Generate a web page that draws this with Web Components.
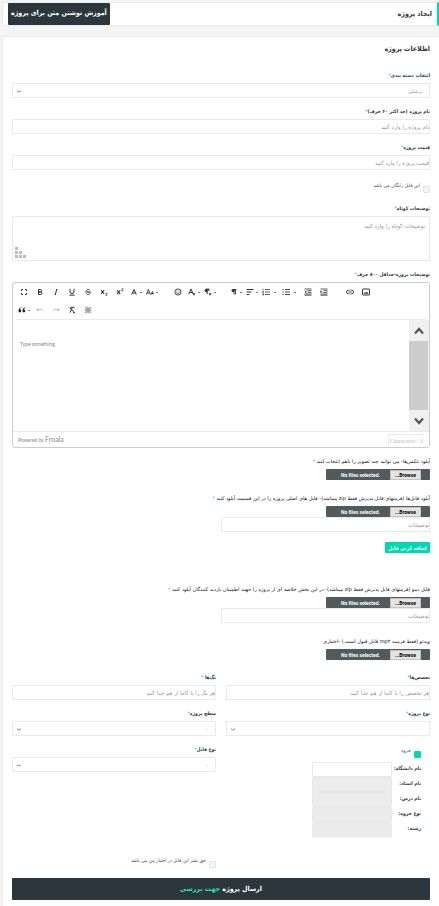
<!DOCTYPE html>
<html lang="fa" dir="rtl">
<head>
<meta charset="UTF-8">
<meta name="viewport" content="width=device-width, initial-scale=1">
<title>ایجاد پروژه</title>
<style>
  body {
    margin: 0;
    background: #f4f4f4;
    color: #2b373a;
    font-family: "DejaVu Sans Condensed", "DejaVu Sans", sans-serif;
    font-size: 5px;
  }
</style>
</head>
<body>
<project-page></project-page>

<script>
const baseStyle = `
  *, *::before, *::after { box-sizing: border-box; }
  :host { display: block; }
  button, input, textarea, select { font-family: inherit; margin: 0; }
  .req { color: #00d7b3; }
`;

const labelStyle = `
  label.title {
    display: block;
    padding: 8px 0 3px;
    font-size: 5px;
    font-weight: bold;
    line-height: 10px;
    white-space: nowrap;
  }
`;

class PageHeader extends HTMLElement {
  connectedCallback() {
    this.attachShadow({ mode: 'open' });
    this.shadowRoot.innerHTML = `
      <style>
        ${baseStyle}
        header {
          display: flex;
          justify-content: space-between;
          align-items: flex-end;
          height: 24px;
          padding: 0 5px;
          background: #fff;
          border: 1px solid #ebebeb;
          border-right: 2px solid #00d7b3;
        }
        h1 {
          margin: 0;
          font-size: 7px;
          line-height: 22px;
          font-weight: bold;
        }
        a {
          display: block;
          padding: 0 3px;
          background: #2b373c;
          border-radius: 1px;
          color: #fff;
          font-size: 7px;
          font-weight: bold;
          line-height: 20px;
          height: 22px;
          text-decoration: none;
          white-space: nowrap;
        }
      </style>
      <header>
        <h1><slot></slot></h1>
        <a href="#guide"><slot name="action"></slot></a>
      </header>
    `;
  }
}

class FormField extends HTMLElement {
  connectedCallback() {
    const kind = this.getAttribute('kind') || 'text';
    const hint = this.getAttribute('placeholder') || '';
    const label = this.getAttribute('label');
    const star = this.getAttribute('star') || '';
    let control = `<input id="control" type="text" placeholder="${hint}">`;
    if (kind === 'select') {
      control = `
        <div class="select">
          <select id="control"><option>${hint}</option></select>
          <svg width="4" height="3" viewBox="0 0 4 3"><path d="M0 .7 2 2.1 4 .7" fill="none" stroke="#666" stroke-width=".8"/></svg>
        </div>`;
    }
    if (kind === 'textarea') {
      control = `
        <div class="area">
          <textarea id="control" placeholder="${hint}"></textarea>
          <svg width="11" height="11" viewBox="0 0 11 11" fill="#bdbdbd">
            <path d="M0 0h3v3H0zM0 4h3v3H0zM4 4h3v3H4zM0 8h3v3H0zM4 8h3v3H4zM8 8h3v3H8z"/>
          </svg>
        </div>`;
    }
    this.attachShadow({ mode: 'open' });
    this.shadowRoot.innerHTML = `
      <style>
        ${baseStyle}
        ${labelStyle}
        input, select, textarea {
          display: block;
          width: 100%;
          height: 15px;
          padding: 0;
          background: #fff;
          border: 1px solid #e9e9e9;
          border-radius: 1px;
          color: #999;
          font-size: 6px;
          outline: none;
        }
        ::placeholder { color: #999; opacity: 1; }
        .select, .area { display: grid; }
        .select > *, .area > * { grid-area: 1 / 1; }
        select { appearance: none; padding: 0 7px; font-size: 5px; }
        .select svg { place-self: center end; margin: 1px 5px 0; pointer-events: none; }
        textarea { height: 45px; padding: 5px 4px; resize: none; line-height: 8px; }
        .area svg { place-self: end; margin: 3px; }
      </style>
      ${label ? `<label class="title" for="control">${label}<span class="req">${star}</span></label>` : ''}
      ${control}
    `;
    if (!label) this.shadowRoot.querySelector('#control').setAttribute('aria-label', hint);
  }
}

class FilePicker extends HTMLElement {
  connectedCallback() {
    const star = this.getAttribute('star') || '';
    this.attachShadow({ mode: 'open' });
    this.shadowRoot.innerHTML = `
      <style>
        ${baseStyle}
        ${labelStyle}
        label.title { color: #111; font-family: "DejaVu Sans", sans-serif; font-weight: normal; }
        .picker {
          display: flex;
          align-items: center;
          width: 104px;
          height: 11px;
          padding: 0 9px;
          gap: 10px;
          background: #515b5e;
          border-radius: 1px;
          color: #fff;
          font: bold 5px Roboto, sans-serif;
          white-space: nowrap;
        }
        input { position: absolute; width: 1px; height: 1px; opacity: 0; }
        .browse {
          width: 31px;
          height: 10px;
          background: #e3e3e3;
          border: 1px solid #c4c4c4;
          color: #000;
          line-height: 8px;
          text-align: center;
        }
      </style>
      <label class="title" for="file">${this.getAttribute('label')}<span class="req">${star}</span></label>
      <label class="picker">
        <input id="file" type="file" multiple>
        <span class="browse">Browse...</span>
        <span dir="ltr">No files selected.</span>
      </label>
    `;
  }
}

class CheckOption extends HTMLElement {
  connectedCallback() {
    this.attachShadow({ mode: 'open' });
    this.shadowRoot.innerHTML = `
      <style>
        ${baseStyle}
        :host { display: flex; align-items: flex-end; gap: 3px; height: 12px; }
        input {
          appearance: none;
          width: 7px;
          height: 7px;
          background: #f3f3f3;
          border: 1px solid #e3e3e3;
          border-radius: 1px;
        }
        input:checked { background: #00d7b3; border-color: #00d7b3; }
        label { align-self: flex-start; font-size: 5px; line-height: 9px; color: #444; white-space: nowrap; }
      </style>
      <input id="check" type="checkbox" ${this.hasAttribute('checked') ? 'checked' : ''}>
      <label for="check">${this.getAttribute('label')}</label>
    `;
  }
}

class InlineField extends HTMLElement {
  connectedCallback() {
    this.attachShadow({ mode: 'open' });
    this.shadowRoot.innerHTML = `
      <style>
        ${baseStyle}
        :host { display: flex; height: 15px; }
        label { width: 29px; line-height: 12px; font-size: 5px; font-weight: bold; white-space: nowrap; }
        input { width: 80px; height: 15px; background: #fff; border: 1px solid #e9e9e9; border-radius: 1px; }
        input:disabled { background: #ececec; }
      </style>
      <label for="value">${this.getAttribute('label')}</label>
      <input id="value" type="text" ${this.hasAttribute('disabled') ? 'disabled' : ''}>
    `;
  }
}

// icons are drawn in an 8x8 box
const icons = {
  fullscreen: ['<path d="M1.5 3V1.5H3M5 1.5h1.5V3M6.5 5v1.5H5M3 6.5H1.5V5"/>'],
  bold: ['<path d="M2.5 1.5h1.9a1.2 1.2 0 0 1 0 2.5H2.5zM2.5 4h2.3a1.25 1.25 0 0 1 0 2.5H2.5z"/>'],
  italic: ['<path d="M4.6 1.5l-1.2 5M4 1.5h1.3M2.8 6.5H4"/>'],
  underline: ['<path d="M2 .8v2.8a2 2 0 0 0 4 0V.8M1.5 7.2h5"/>'],
  strike: ['<path d="M5.8 2.2C5 .9 2.4 1.1 2.4 2.6 2.4 4 5.8 3.8 5.8 5.3 5.8 7 2.9 7 2.2 5.6M.8 4h6.4" stroke-width=".8"/>'],
  sub: ['<path d="m1 2 3.2 3.8M4.2 2 1 5.8" stroke-width="1.1"/><path d="M5.6 5.3h1.6L5.7 7.3h1.7" stroke-width=".7"/>'],
  sup: ['<path d="m1 2.4 3.2 3.8M4.2 2.4 1 6.2" stroke-width="1.1"/><path d="M5.6.8h1.6L5.7 2.8h1.7" stroke-width=".7"/>'],
  color: ['<path d="M1.7 6.5 4 1.5l2.3 5M2.5 5h3"/>', 1],
  size: ['<path d="M.4 6.5 2.4 1.5l2 5M1 5h2.8M5.2 6.5l1.2-3 1.2 3M5.5 5.6h1.8" stroke-width=".9"/>', 1],
  smile: ['<circle cx="4" cy="4" r="3.1" stroke-width=".9"/><path d="M2.3 4.5q1.7 2.2 3.4 0M2.8 2.5v.9M5.2 2.5v.9" stroke-width=".8"/>'],
  inlineClass: ['<path d="M.8 6 3 1l2.2 5M1.8 4.5h2.4"/><path d="m6 4.4.5 1 1.1.1-.8.8.2 1.1-1-.6-1 .6.2-1.1-.8-.8 1.1-.1z" fill="#333" stroke="none"/>', 1],
  paraStyle: ['<path d="M3 1.2h-.7a1.3 1.3 0 0 0 0 2.6H3z" fill="#333"/><path d="M5.6 1.2H2.3M3.2 1.2v5M4.8 1.2v2"/><path d="m6 4.4.5 1 1.1.1-.8.8.2 1.1-1-.6-1 .6.2-1.1-.8-.8 1.1-.1z" fill="#333" stroke="none"/>', 1],
  paragraph: ['<path d="M6.5 1.5H3.3M4 1.5v5M5.5 1.5v5" stroke-width=".9"/><path d="M4 1.5H3a1 1 0 0 0 0 2.2h1z" fill="#333"/>', 1],
  align: ['<path d="M.5 1.5h7M.5 4h5M.5 6.5h3"/>', 1],
  ordered: ['<path d="M3 1.5h5M3 4h5M3 6.5h5M1 .8v1.6M.5 3.5h1L.5 5h1M.5 6h1v1h-1" stroke-width=".8"/>', 1, 1],
  list: ['<path d="M3 1.5h5M3 4h5M3 6.5h5M.5 1.5h1.2M.5 4h1.2M.5 6.5h1.2" stroke-width=".9"/>', 1, 1],
  outdent: ['<path d="M.5 1h7M3.5 2.7h4M3.5 4.3h4M.5 6h7M.5 7.2h7" stroke-width=".8"/><path d="M2.4 2.2v3L.5 3.7z" fill="#333" stroke="none"/>'],
  indent: ['<path d="M.5 1h7M3.5 2.7h4M3.5 4.3h4M.5 6h7M.5 7.2h7" stroke-width=".8"/><path d="M.5 2.2v3l1.9-1.5z" fill="#333" stroke="none"/>'],
  link: ['<path d="M3.5 2.2H2.3a1.8 1.8 0 0 0 0 3.6h1.2M4.5 2.2h1.2a1.8 1.8 0 0 1 0 3.6H4.5M2.5 4h3" stroke-width=".9"/>'],
  image: ['<rect x=".5" y="1" width="7" height="6" rx=".5"/><path d="m1.5 5.7 1.3-1.6 1 1 1.2-1.7 1.5 2.3z" fill="#333" stroke="none"/>'],
  quote: ['<path d="M3.4 1.2C1.5 1.6.5 3 .5 5a1.4 1.4 0 1 0 1.4-1.4C2 2.6 2.6 2 3.6 1.7zM7.4 1.2C5.5 1.6 4.5 3 4.5 5a1.4 1.4 0 1 0 1.4-1.4C6 2.6 6.6 2 7.6 1.7z" fill="#222" stroke="none"/>', 1],
  undo: ['<path d="M1 2.5v2h2M1.2 4.3Q4 1.5 7.2 5" stroke="#bbb"/>'],
  redo: ['<path d="M7 2.5v2H5M6.8 4.3Q4 1.5.8 5" stroke="#bbb"/>'],
  clear: ['<path d="M2.3 1.3h4.2M4.3 1.5 2 6.7M1.5 1.7l5 5M5 6.7h2"/>'],
  selectAll: ['<path d="M1.3 1.3h5.4v5.4H1.3z" stroke="#666" stroke-width=".8" stroke-dasharray="1 .6"/><rect x="2.7" y="2.7" width="2.6" height="2.6" fill="#aaa" stroke="#666" stroke-width=".6"/>']
};

const toolGroups = [
  ['fullscreen', 'bold', 'italic', 'underline', 'strike', 'sub', 'sup', 'color', 'size'],
  ['smile', 'inlineClass', 'paraStyle'],
  ['paragraph', 'align', 'ordered', 'list', 'outdent', 'indent'],
  ['link', 'image'],
  ['quote', 'undo', 'redo', 'clear', 'selectAll']
];

class TextEditor extends HTMLElement {
  connectedCallback() {
    const tool = (name) => {
      const [shape, menu, wide] = icons[name];
      return `
        <button type="button" aria-label="${name}" class="${menu ? 'menu' : ''} ${wide ? 'wide' : ''}">
          <svg width="8" height="8" viewBox="0 0 8 8" fill="none" stroke="#333">${shape}</svg>
        </button>`;
    };
    this.attachShadow({ mode: 'open' });
    this.shadowRoot.innerHTML = `
      <style>
        ${baseStyle}
        ${labelStyle}
        .editor {
          direction: ltr;
          background: #fff;
          border: 1px solid #ccc;
          border-radius: 3px;
          font-family: Lato, sans-serif;
        }
        .toolbar {
          display: flex;
          flex-wrap: wrap;
          column-gap: 10px;
          margin: 0 3px;
          border-bottom: 1px solid #ebebeb;
        }
        .group { display: flex; }
        button {
          display: flex;
          align-items: center;
          justify-content: center;
          width: 16px;
          height: 18px;
          padding: 0;
          background: none;
          border: 0;
        }
        .menu { justify-content: flex-start; padding: 0 2px; gap: 2px; }
        .menu::after { content: ""; width: 2px; height: 1px; background: #777; }
        .wide { width: 20px; gap: 4px; }
        .content { display: flex; height: 111px; }
        textarea {
          flex: 1;
          min-width: 0;
          padding: 20px 7px;
          border: 0;
          outline: none;
          resize: none;
          font-size: 5px;
          line-height: 8px;
        }
        ::placeholder { color: #888; opacity: 1; }
        .scroll {
          display: flex;
          flex-direction: column;
          width: 20px;
          background: #f0f0f0;
        }
        .scroll button { width: 20px; height: 21px; }
        .thumb { flex: 1; margin-right: 1px; background: #cdcdcd; }
        footer {
          display: flex;
          justify-content: space-between;
          align-items: flex-end;
          height: 16px;
          padding: 0 5px;
          border-top: 1px solid #ebebeb;
          color: #888;
          font-size: 5px;
        }
        footer a { align-self: center; color: inherit; text-decoration: none; line-height: 12px; }
        footer b { font-size: 7px; font-weight: normal; }
        .count {
          padding: 0 1px;
          border: 1px solid #ebebeb;
          border-width: 1px 0 0 1px;
          color: #bbb;
          font-family: "Liberation Serif", serif;
          font-size: 6px;
          line-height: 12px;
        }
      </style>
      <label class="title" for="body">${this.getAttribute('label')}<span class="req">*</span></label>
      <div class="editor">
        <div class="toolbar">
          ${toolGroups.map((g) => `<div class="group">${g.map(tool).join('')}</div>`).join('')}
        </div>
        <div class="content">
          <textarea id="body" placeholder="Type something"></textarea>
          <div class="scroll">
            <button type="button" aria-label="up"><svg width="10" height="8" viewBox="0 0 10 8"><path d="M1 6.5 5 2l4 4.5" fill="none" stroke="#555" stroke-width="2.2"/></svg></button>
            <div class="thumb"></div>
            <button type="button" aria-label="down"><svg width="10" height="8" viewBox="0 0 10 8"><path d="M1 1.5 5 6l4-4.5" fill="none" stroke="#555" stroke-width="2.2"/></svg></button>
          </div>
        </div>
        <footer>
          <a href="#froala">Powered by <b>Froala</b></a>
          <span class="count">Characters : 0</span>
        </footer>
      </div>
    `;
  }
}

class ProjectPage extends HTMLElement {
  connectedCallback() {
    this.attachShadow({ mode: 'open' });
    this.shadowRoot.innerHTML = `
      <style>
        ${baseStyle}
        :host {
          display: flex;
          flex-direction: column;
          gap: 10px;
          min-height: 100vh;
          padding: 2px 0 0 2px;
        }
        main {
          flex: 1;
          padding: 4px 9px 6px;
          background: #fff;
          border: 1px solid #ebebeb;
          border-width: 1px 0 0 1px;
        }
        h2 { margin: 0 0 5px; font-size: 7px; line-height: 16px; }
        .free { margin: 11px 0 2px; }
        .short { width: 50%; }
        .add {
          display: block;
          width: 45px;
          height: 11px;
          margin: 10px 0 23px;
          padding: 0;
          background: #00d7b3;
          border: 0;
          border-radius: 1px;
          color: #fff;
          font-size: 5px;
          font-weight: bold;
          white-space: nowrap;
        }
        file-picker + file-picker { margin-top: 5px; }
        .video { margin-top: 5px; }
        .columns { display: grid; grid-template-columns: 1fr 1fr; gap: 10px; margin-top: 4px; }
        .booklet { margin: 10px 9px 0; }
        .booklet inline-field:first-of-type { margin-top: 4px; }
        .rights { margin-top: 84px; }
        .submit {
          display: block;
          width: 100%;
          height: 22px;
          margin-top: 10px;
          padding: 0;
          background: #2b373c;
          border: 0;
          border-radius: 1px;
          color: #fff;
          font-size: 7px;
          font-weight: bold;
        }
        .submit span { color: #1fe5bd; }
      </style>
      <page-header>ایجاد پروژه<span slot="action">آموزش نوشتن متن برای پروژه</span></page-header>
      <main>
        <h2>اطلاعات پروژه</h2>
        <form-field kind="select" label="انتخاب دسته بندی" star="*" placeholder="پزشکی"></form-field>
        <form-field label="نام پروژه (حد اکثر ۶۰ حرف)" star="*" placeholder="نام پروژه را وارد کنید"></form-field>
        <form-field label="قیمت پروژه" star="*" placeholder="قیمت پروژه را وارد کنید"></form-field>
        <check-option class="free" label="این فایل رایگان می باشد"></check-option>
        <form-field kind="textarea" label="توضیحات کوتاه" star="*" placeholder="توضیحات کوتاه را وارد کنید"></form-field>
        <text-editor label="توضیحات پروژه-حداقل ۸۰۰ حرف"></text-editor>
        <file-picker label="آپلود عکس‌ها- می توانید چند تصویر را باهم انتخاب کنید" star=" *"></file-picker>
        <file-picker label="آپلود فایل‌ها (فرمتهای قابل پذیرش فقط zip میباشد)- فایل های اصلی پروژه را در این قسمت آپلود کنید" star=" *"></file-picker>
        <form-field class="short" placeholder="توضیحات"></form-field>
        <button class="add" type="button">اضافه کردن فایل</button>
        <file-picker label="فایل دمو (فرمتهای قابل پذیرش فقط zip میباشد)- در این بخش خلاصه ای از پروژه را جهت اطمینان بازدید کنندگان آپلود کنید" star=" *"></file-picker>
        <form-field class="short" placeholder="توضیحات"></form-field>
        <file-picker class="video" label="ویدئو (فقط فرمت mp۴ قابل قبول است.) -اختیاری"></file-picker>
        <div class="columns">
          <div>
            <form-field label="تخصص‌ها" star="*" placeholder="هر تخصص را با کاما از هم جدا کنید"></form-field>
            <form-field kind="select" label="نوع پروژه" star="*" placeholder="-"></form-field>
            <div class="booklet">
              <check-option label="جزوه" checked></check-option>
              <inline-field label="نام دانشگاه:"></inline-field>
              <inline-field label="نام استاد:" disabled></inline-field>
              <inline-field label="نام درس:" disabled></inline-field>
              <inline-field label="نوع جزوه:" disabled></inline-field>
              <inline-field label="رشته:" disabled></inline-field>
            </div>
          </div>
          <div>
            <form-field label="تگ‌ها" star=" *" placeholder="هر تگ را با کاما از هم جدا کنید"></form-field>
            <form-field kind="select" label="سطح پروژه" star="*" placeholder="-"></form-field>
            <form-field kind="select" label="نوع فایل" star="*" placeholder="-"></form-field>
            <check-option class="rights" label="حق نشر این فایل در اختیار من می باشد"></check-option>
          </div>
        </div>
        <button class="submit" type="submit">ارسال پروژه <span>جهت بررسی</span></button>
      </main>
    `;
  }
}

customElements.define('page-header', PageHeader);
customElements.define('form-field', FormField);
customElements.define('file-picker', FilePicker);
customElements.define('check-option', CheckOption);
customElements.define('inline-field', InlineField);
customElements.define('text-editor', TextEditor);
customElements.define('project-page', ProjectPage);
</script>
</body>
</html>
